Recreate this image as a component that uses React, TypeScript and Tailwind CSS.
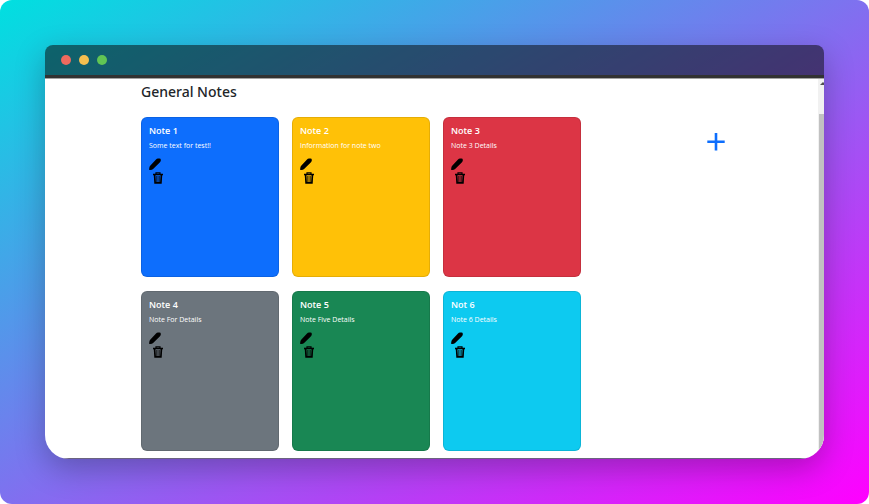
type Note = { title: string; details: string; color: string };

const notes: Note[] = [
  { title: "Note 1", details: "Some text for test!!", color: "bg-[#0d6efd]" },
  { title: "Note 2", details: "Information for note two", color: "bg-[#ffc107]" },
  { title: "Note 3", details: "Note 3 Details", color: "bg-[#dc3545]" },
  { title: "Note 4", details: "Note For Details", color: "bg-[#6c757d]" },
  { title: "Note 5", details: "Note Five Details", color: "bg-[#198754]" },
  { title: "Not 6", details: "Note 6 Details", color: "bg-[#0dcaf0]" },
];

function PencilIcon() {
  return (
    <svg viewBox="0 0 12 12" className="size-3" aria-hidden="true">
      <path d="M7 1.4Q7.8.5 9 .5H10.4Q11.8.5 11.8 1.7V2.5Q11.8 3.4 11 4.2L4.4 10.8Q3.2 12 1.2 12H.2V10.4Q.3 8.6 1.4 7.4Z" />
    </svg>
  );
}

function TrashIcon() {
  return (
    <svg viewBox="0 0 10 12" className="h-3 w-[10px]" fill="none" stroke="black" aria-hidden="true">
      <path d="M0 2.5H10" strokeWidth="1.6" />
      <path d="M3 2V.8H7V2" strokeWidth="1.2" />
      <path d="M1.6 3L2.1 10.8H7.9L8.4 3" strokeWidth="1.7" />
      <path d="M3.9 4V10M6.1 4V10" strokeWidth="1" />
    </svg>
  );
}

function NoteCard({ note }: { note: Note }) {
  return (
    <article className={`h-[160px] rounded-md border border-black/10 px-[7px] pt-[5px] text-white ${note.color}`}>
      <h2 className="text-[9px] leading-4 font-semibold">{note.title}</h2>
      <p className="mt-px text-[7px] leading-3 whitespace-nowrap">{note.details}</p>
      <div className="mt-[6px] flex flex-col items-start gap-[2px]">
        <button type="button" aria-label={`Edit ${note.title}`}>
          <PencilIcon />
        </button>
        <button type="button" aria-label={`Delete ${note.title}`} className="ml-1">
          <TrashIcon />
        </button>
      </div>
    </article>
  );
}

export default function App() {
  return (
    <div className="flex min-h-screen flex-col rounded-xl bg-[linear-gradient(to_bottom_right,#00e0e0,#ff00ff)] p-[45px] font-['Open_Sans','Noto_Sans',sans-serif]">
      <div className="flex flex-1 flex-col overflow-hidden rounded-t-lg rounded-b-3xl shadow-[0_10px_30px_rgba(0,0,0,0.25)]">
        <header className="flex h-[30px] items-center gap-2 bg-[#0a0a0a]/55 px-4">
          <span className="size-[10px] rounded-full bg-[#ed6a5e]" />
          <span className="size-[10px] rounded-full bg-[#f5bf4f]" />
          <span className="size-[10px] rounded-full bg-[#61c554]" />
        </header>
        <div className="flex flex-1 border-t-[3px] border-[#323232] bg-white">
          <main className="flex flex-1 flex-col border-y border-t-[#a3a3a3] border-b-[#6b6480] pl-24">
            <h1 className="mt-px font-['Noto_Sans','Open_Sans',sans-serif] text-sm leading-6 font-medium text-[#212529]">General Notes</h1>
            <div className="mt-[13px] flex">
              <section className="grid w-[440px] grid-cols-3 gap-x-[13px] gap-y-[14px]">
                {notes.map((note) => (
                  <NoteCard key={note.title} note={note} />
                ))}
              </section>
              <div className="ml-[126px] pt-4">
                <button type="button" aria-label="Add note" className="block">
                  <svg viewBox="0 0 18 18" className="size-[18px]" fill="none" stroke="#0d6efd" strokeWidth="2.6" aria-hidden="true">
                    <path d="M9 0V17.5M.3 8.7H17.7" />
                  </svg>
                </button>
              </div>
            </div>
          </main>
          <div className="flex w-[6px] flex-col border-t border-[#a3a3a3] bg-[#f1f1f1] pl-px" aria-hidden="true">
            <svg viewBox="0 0 5 3" className="mt-[3px] mb-[29px] h-[3px] w-[5px]">
              <path d="M1 3L4 0L5 1V3Z" fill="#505050" />
            </svg>
            <div className="flex-1 bg-[#c1c1c1]" />
          </div>
        </div>
      </div>
    </div>
  );
}
